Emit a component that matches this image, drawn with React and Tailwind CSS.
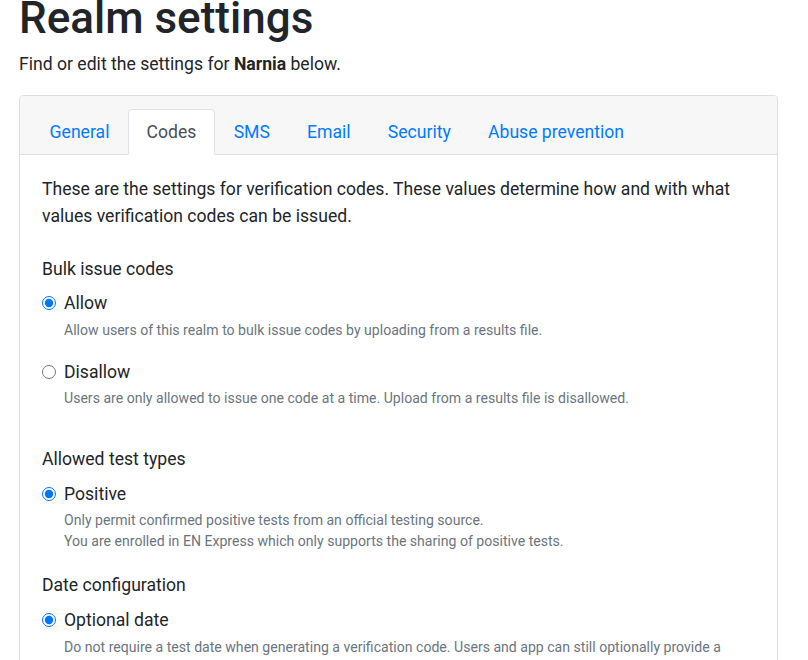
import React from 'react'

const tabs = ['General', 'Codes', 'SMS', 'Email', 'Security', 'Abuse prevention']

const Radio = ({ checked, label, children, className = '' }) => (
    <div className={`relative pl-[22px] ${className}`}>
        <input
            type="radio"
            defaultChecked={checked}
            className="absolute left-0 top-[6px] m-0 w-[14px] h-[14px] accent-[#0075ff]"
        />
        <label className="block leading-[26.4px]">{label}</label>
        <div className="mt-[3px] pr-[24px] text-[14.08px] leading-[21px] text-[#6c757d]">{children}</div>
    </div>
)

const App = () => {
    return (
        <div className="min-h-screen bg-white px-[19px] text-[17.6px] text-[#212529]" style={{ fontFamily: 'Roboto, "Liberation Sans", sans-serif' }}>
            <h1 className="-mt-[8px] text-[44px] font-medium leading-[52.8px] mb-[8px]">Realm settings</h1>
            <p className="leading-[26.4px] -mt-[2px] mb-[18px]">
                Find or edit the settings for <strong className="font-bold">Narnia</strong> below.
            </p>

            <div className="w-[759px] border border-[#dfdfdf] rounded-[4px] overflow-hidden">
                <div className="bg-[#f7f7f7] border-b border-[#dfdfdf] px-[22px] pt-[13px]">
                    <ul className="flex -ml-[11px] -mb-px">
                        {tabs.map((t) => (
                            <li key={t}>
                                <a
                                    href="#"
                                    className={
                                        t === 'Codes'
                                            ? 'block px-[17.6px] py-[8.8px] leading-[26.4px] border border-[#dee2e6] border-b-white bg-white rounded-t-[4.4px] text-[#495057]'
                                            : 'block px-[17.6px] py-[8.8px] leading-[26.4px] border border-transparent text-[#007bff]'
                                    }
                                >
                                    {t}
                                </a>
                            </li>
                        ))}
                    </ul>
                </div>

                <div className="px-[22px] pt-[21px] pb-[40px]">
                    <p className="leading-[26.4px] mb-[27px]">
                        These are the settings for verification codes. These values determine how and with what values verification codes can be issued.
                    </p>

                    <div className="leading-[26.4px] mb-[8px]">Bulk issue codes</div>
                    <Radio checked label="Allow">
                        Allow users of this realm to bulk issue codes by uploading from a results file.
                    </Radio>
                    <Radio label="Disallow" className="mt-[18px]">
                        Users are only allowed to issue one code at a time. Upload from a results file is disallowed.
                    </Radio>

                    <div className="leading-[26.4px] mt-[37px] mb-[8px]">Allowed test types</div>
                    <Radio checked label="Positive">
                        Only permit confirmed positive tests from an official testing source.
                        <br />
                        You are enrolled in EN Express which only supports the sharing of positive tests.
                    </Radio>

                    <div className="leading-[26.4px] mt-[20px] mb-[9px]">Date configuration</div>
                    <Radio checked label="Optional date">
                        Do not require a test date when generating a verification code. Users and app can still optionally provide a test date.
                    </Radio>
                </div>
            </div>
        </div>
    )
}

export default App
